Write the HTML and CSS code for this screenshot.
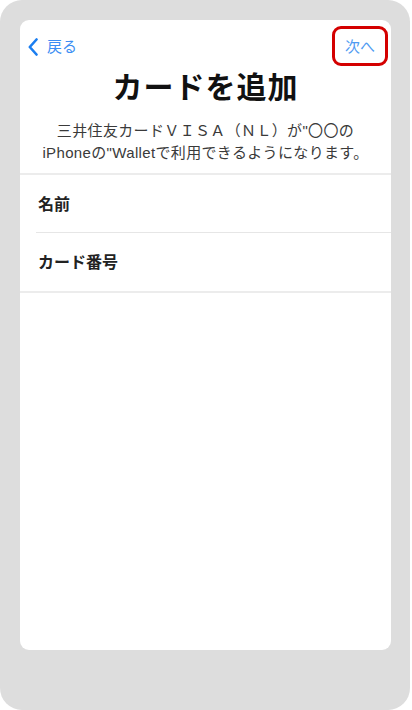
FILE: index.html
```html
<!DOCTYPE html>
<html lang="ja">
<head>
    <meta charset="UTF-8">
    <title>カードを追加</title>
    <link rel="stylesheet" href="styles.css">
</head>
<body>
    <div class="phone">
        <div class="screen">
            <div class="nav">
                <a class="back" href="#">
                    <svg class="chevron" width="10" height="18" viewBox="0 0 10 18">
                        <polyline points="8.5,1.5 1.8,9 8.5,16.5" fill="none" stroke="#1b7ef0" stroke-width="2.6" stroke-linecap="round" stroke-linejoin="round"/>
                    </svg>
                    <span>戻る</span>
                </a>
                <a class="next" href="#">次へ</a>
            </div>

            <h1>カードを追加</h1>
            <p class="desc">三井住友カードＶＩＳＡ（ＮＬ）が"〇〇の<br>iPhoneの"Walletで利用できるようになります。</p>

            <div class="fields">
                <div class="field">名前</div>
                <div class="field">カード番号</div>
            </div>
        </div>
    </div>
</body>
</html>
```

FILE: styles.css
```css
body {
    margin: 0;
    background: #fff;
    font-family: "Liberation Sans", "Noto Sans CJK JP", sans-serif;
}
.phone {
    width: 410px;
    height: 710px;
    box-sizing: border-box;
    padding: 20px 19px 60px 20px;
    background: #dddddd;
    border-radius: 22px;
}
.screen {
    height: 630px;
    background: #fff;
    border-radius: 9px;
    overflow: hidden;
}
.nav {
    display: flex;
    justify-content: space-between;
    align-items: center;
    padding: 6px 3px 0 8px;
    height: 40px;
}
.back {
    display: flex;
    align-items: center;
    gap: 9px;
    color: #3b8ef3;
    text-decoration: none;
    font-size: 15px;
    line-height: 20px;
    margin-top: 1px;
}
.chevron {
    display: block;
}
.next {
    box-sizing: border-box;
    width: 56px;
    height: 40px;
    display: flex;
    align-items: center;
    justify-content: center;
    border: 3px solid #d40000;
    border-radius: 9px;
    color: #4f9bf2;
    text-decoration: none;
    font-size: 15px;
    padding-bottom: 2px;
}
h1 {
    margin: 4px 0 0;
    text-align: center;
    font-size: 30px;
    line-height: 36px;
    font-weight: bold;
    letter-spacing: 1px;
    color: #111;
}
.desc {
    margin: 14px 0 0;
    text-align: center;
    font-size: 15px;
    line-height: 22px;
    letter-spacing: 0.35px;
    color: #3a3a3a;
}
.fields {
    margin-top: 9px;
    border-top: 2px solid #ececec;
    border-bottom: 2px solid #ececec;
}
.field {
    margin-left: 16px;
    padding-left: 2px;
    height: 57px;
    padding-bottom: 2px;
    box-sizing: border-box;
    display: flex;
    align-items: center;
    font-size: 16px;
    font-weight: bold;
    color: #222;
}
.field + .field {
    height: 59px;
    border-top: 1px solid #e6e6e6;
}
```
